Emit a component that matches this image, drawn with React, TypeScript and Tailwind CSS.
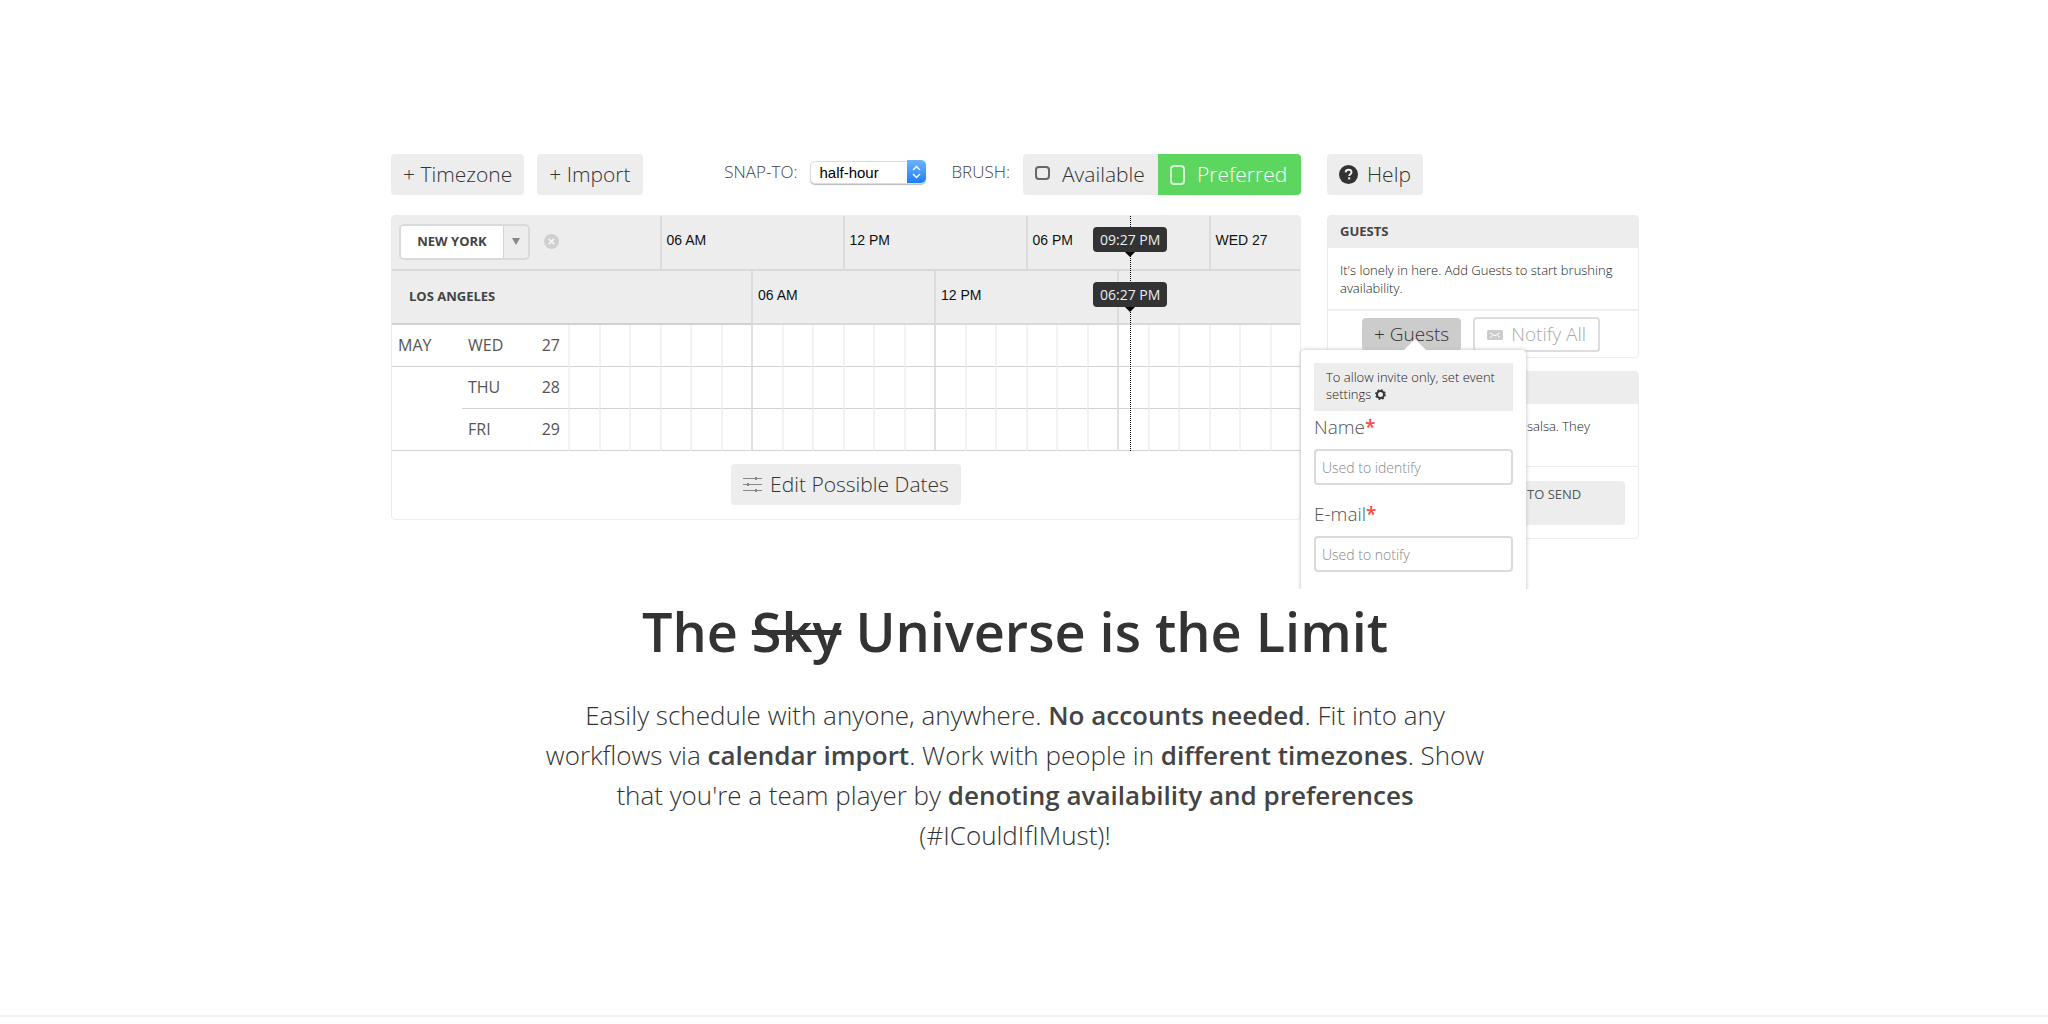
import React from "react";

const buttonBase =
  "flex h-[41px] shrink-0 items-center rounded-[4px] bg-[#ededed] text-[21px] font-light text-[#333] whitespace-nowrap";

const days = [
  { month: "MAY", day: "WED", date: "27" },
  { month: "", day: "THU", date: "28" },
  { month: "", day: "FRI", date: "29" },
];

function HelpIcon() {
  return (
    <svg width="19" height="19" viewBox="0 0 19 19" aria-hidden="true">
      <circle cx="9.5" cy="9.5" r="9.5" fill="#333" />
      <path
        d="M6.6 7.4c.1-1.700 1.300-2.600 3-2.600 1.600 0 2.900.9 2.900 2.400 0 1.900-2.300 2-2.300 3.700"
        fill="none"
        stroke="#ededed"
        strokeWidth="1.900"
      />
      <rect x="9.100" y="12.300" width="2.100" height="2.100" fill="#ededed" />
    </svg>
  );
}

function SlidersIcon() {
  return (
    <svg width="19" height="15" viewBox="0 0 19 15" fill="none" stroke="#888" strokeWidth="1" aria-hidden="true">
      <path d="M0 1.500h19M0 7.500h19M0 13.500h19" />
      <path d="M12 1.500h2M4 7.500h2M12 13.500h2" strokeWidth="3" />
    </svg>
  );
}

function MailIcon() {
  return (
    <svg width="16" height="10" viewBox="0 0 16 10" aria-hidden="true">
      <rect width="16" height="10" rx="1.500" fill="#ccc" />
      <path d="M3 2.800l5 3 5-3M3 7.500l2.500-2M13 7.500l-2.500-2" fill="none" stroke="#fff" strokeWidth="1" />
    </svg>
  );
}

function GearIcon() {
  return (
    <svg className="ml-1 inline-block align-[-1px]" width="11" height="11" viewBox="0 0 11 11" fill="none" stroke="#333" aria-hidden="true">
      <circle cx="5.500" cy="5.500" r="3.500" strokeWidth="2" />
      <circle cx="5.500" cy="5.500" r="4.800" strokeWidth="1.200" strokeDasharray="1.900 1.870" />
    </svg>
  );
}

function Toolbar() {
  return (
    <div className="flex h-[41px] items-center">
      <button className={buttonBase + " px-3"}>+ Timezone</button>
      <button className={buttonBase + " ml-[13px] px-3"}>+ Import</button>
      <div className="mb-[6px] ml-auto flex items-center">
        <label htmlFor="snap" className="text-[17px] font-light text-[#444]">
          SNAP-TO:
        </label>
        <div className="relative ml-[13px] h-[23px] w-[116px]">
          <select
            id="snap"
            className="h-full w-full appearance-none rounded-[5px] border border-[#ddd] bg-white pl-2 font-['Liberation_Sans',sans-serif] text-[15px] leading-none text-black shadow-[0_1px_1px_#bbb]"
          >
            <option>half-hour</option>
          </select>
          <span className="pointer-events-none absolute inset-y-0 right-0 flex w-[19px] items-center justify-center rounded-r-[5px] bg-linear-to-b from-[#6cb3fa] to-[#1a7dfb]">
            <svg width="9" height="14" viewBox="0 0 9 14" fill="none" stroke="#fff" strokeWidth="1.500" aria-hidden="true">
              <path d="M1 5l3.500-3.500L8 5M1 9l3.500 3.500L8 9" />
            </svg>
          </span>
        </div>
        <span className="ml-[25px] text-[17px] font-light text-[#444]">BRUSH:</span>
      </div>
      <div className="ml-[13px] flex">
        <button className={buttonBase + " w-[135px] rounded-r-none pl-3"}>
          <span className="mb-1 h-[14px] w-[15px] rounded-[4px] border-2 border-[#666]" />
          <span className="ml-3">Available</span>
        </button>
        <button className="flex h-[41px] w-[143px] items-center rounded-r-[4px] bg-[#5cd65f] pl-3 text-[21px] font-light text-white">
          <span className="h-5 w-[15px] rounded-[4px] border-2 border-[#d5f5d5]" />
          <span className="ml-3">Preferred</span>
        </button>
      </div>
    </div>
  );
}

function TimeMarker({ label }: { label: string }) {
  return (
    <div className="flex h-[55px] flex-col items-center pt-[11px]">
      <span className="flex h-[25px] w-[74px] items-center justify-center rounded-[4px] bg-[#333] text-[14px] text-[#eee] whitespace-nowrap">
        {label}
      </span>
      <span className="h-0 w-0 border-x-[5px] border-t-[5px] border-x-transparent border-t-black" />
    </div>
  );
}

const tick =
  "border-b-2 border-l-2 border-b-[#d9d9d9] border-l-[#dcdcdc] pb-1 pl-[5px] text-left align-middle font-['Liberation_Sans',sans-serif] text-[14px] font-normal text-[#111]";

function Calendar() {
  return (
    <div className="relative mt-5 rounded-[4px] border border-[#ececec]">
      <table className="w-full table-fixed border-separate border-spacing-0 text-[16px] font-light text-[#444]">
        <colgroup>
          <col className="w-[70px]" />
          <col className="w-[60px]" />
          <col className="w-[46px]" />
          {Array.from({ length: 24 }, (_, i) => (
            <col key={i} />
          ))}
        </colgroup>
        <thead className="bg-[#ededed]">
          <tr className="h-[55px]">
            <th colSpan={6} className="border-b-2 border-[#d9d9d9] pb-[2px] pl-[7px] font-normal">
              <div className="flex items-center">
                <div className="flex h-9 w-[131px] rounded-[5px] border-2 border-[#dadada]">
                  <button className="grow rounded-l-[3px] bg-white text-[13px] font-bold text-[#444]">NEW YORK</button>
                  <button aria-label="Choose timezone" className="flex w-[25px] items-center justify-center border-l border-[#d5d5d5]">
                    <span className="h-0 w-0 border-x-[4px] border-t-[7px] border-x-transparent border-t-[#888]" />
                  </button>
                </div>
                <button aria-label="Remove timezone" className="ml-[14px]">
                  <svg width="15" height="15" viewBox="0 0 15 15" aria-hidden="true">
                    <circle cx="7.500" cy="7.500" r="7.500" fill="#cfcfcf" />
                    <path d="M4.800 4.800l5.400 5.400M10.200 4.800l-5.400 5.400" stroke="#f4f4f4" strokeWidth="1.800" />
                  </svg>
                </button>
              </div>
            </th>
            <th colSpan={6} className={tick}>06 AM</th>
            <th colSpan={6} className={tick}>12 PM</th>
            <th colSpan={6} className={tick}>06 PM</th>
            <th colSpan={3} className={tick}>WED 27</th>
          </tr>
          <tr className="h-[54px]">
            <th colSpan={9} className="border-b-2 border-[#d0d0d0] pl-[17px] text-left text-[13px] font-bold text-[#444]">
              LOS ANGELES
            </th>
            <th colSpan={6} className={tick}>06 AM</th>
            <th colSpan={6} className={tick}>12 PM</th>
            <th colSpan={6} className={tick} />
          </tr>
        </thead>
        <tbody>
          {days.map(({ month, day, date }, row) => (
            <tr key={day} className="h-[42px]">
              <td className={(row === 1 ? "border-transparent" : "border-[#d2d2d2]") + " border-b pb-[2px] pl-[6px] font-normal text-[#555]"}>
                {month}
              </td>
              <td className="border-b border-[#d2d2d2] pb-[2px] pl-[6px] font-normal text-[#555]">{day}</td>
              <td className="border-b border-[#d2d2d2] pr-2 pb-[2px] text-right font-normal text-[#555]">{date}</td>
              {Array.from({ length: 24 }, (_, i) => (
                <td
                  key={i}
                  className={
                    (i > 0 && i % 6 === 0 ? "border-l-[#e0e0e0]" : "border-l-[#f2f2f2]") +
                    " border-b border-l-2 border-b-[#d2d2d2]"
                  }
                />
              ))}
            </tr>
          ))}
        </tbody>
      </table>
      <div className="flex justify-center pt-[13px] pb-[14px]">
        <button className={buttonBase + " gap-2 px-3"}>
          <SlidersIcon />
          Edit Possible Dates
        </button>
      </div>
      <div className="absolute top-0 left-[81.300%] flex h-[235px] w-0 flex-col items-center">
        <div className="absolute inset-y-0 border-l border-dotted border-black" />
        <div className="relative">
          <TimeMarker label="09:27 PM" />
          <TimeMarker label="06:27 PM" />
        </div>
      </div>
    </div>
  );
}

function Field({ id, label, placeholder }: { id: string; label: string; placeholder: string }) {
  return (
    <div className="flex h-[87px] flex-col">
      <label htmlFor={id} className="h-[38px] text-[19px] leading-8 font-light text-[#555]">
        {label}
        <span className="font-semibold text-[#f44]">*</span>
      </label>
      <input
        id={id}
        placeholder={placeholder}
        className="h-9 w-full rounded-[4px] border-2 border-[#dadada] px-[6px] text-[14px] font-light placeholder:text-[#888]"
      />
    </div>
  );
}

function GuestPopover() {
  return (
    <div className="absolute top-[135px] left-[-26px] w-[225px] rounded-t-[4px] bg-white px-[13px] pt-[13px] pb-8 shadow-[0_0_4px_#bbb]">
      <span className="absolute -top-[11px] left-[102px] h-0 w-0 border-x-[12px] border-b-[12px] border-x-transparent border-b-white" />
      <p className="h-12 bg-[#ededed] pt-[6px] pl-3 text-[13px] leading-[17px] font-light text-[#222]">
        To allow invite only, set event settings
        <GearIcon />
      </p>
      <Field id="name" label="Name" placeholder="Used to identify" />
      <Field id="email" label="E-mail" placeholder="Used to notify" />
    </div>
  );
}

function Sidebar() {
  return (
    <div className="w-[312px] shrink-0">
      <button className={buttonBase + " gap-[9px] px-3"}>
        <HelpIcon />
        Help
      </button>
      <div className="relative mt-5">
        <section className="h-[143px] rounded-[4px] border border-[#ececec]">
          <h2 className="flex h-8 items-center bg-[#ededed] pl-3 text-[13px] font-bold text-[#444]">GUESTS</h2>
          <p className="h-[63px] border-b-2 border-[#f0f0f0] pt-[13px] pl-3 text-[13px] leading-[18px] font-light text-[#222]">
            It's lonely in here. Add Guests to start brushing availability.
          </p>
          <div className="flex items-center justify-center gap-3 pt-[6px] pr-4 pl-3">
            <button className="h-[33px] rounded-[4px] bg-[#ccc] px-3 text-[19px] font-light text-[#333]">+ Guests</button>
            <button className="flex h-[35px] items-center gap-2 rounded-[4px] border-2 border-[#ddd] px-3 text-[19px] font-light text-[#aaa]">
              <MailIcon />
              Notify All
            </button>
          </div>
        </section>
        <section className="mt-[13px] h-[168px] rounded-[4px] border border-[#ececec]">
          <div className="h-8 bg-[#ededed]" />
          <p className="h-[63px] border-b border-[#ececec] pt-[13px] pl-[199px] text-[13px] leading-[18px] font-light text-[#222]">
            salsa. They
          </p>
          <button className="mx-[14px] mt-[14px] flex h-11 w-[283px] rounded-[4px] bg-[#ededed] pt-1 pl-[185px] text-[13px] text-[#555]">
            TO SEND
          </button>
        </section>
        <GuestPopover />
      </div>
    </div>
  );
}

export default function App() {
  return (
    <main className="border-b-2 border-[#f2f2f2] bg-white pt-[154px] pr-[18px] pb-[160px] font-['Open_Sans',sans-serif]">
      <div className="mx-auto flex max-w-[1248px] gap-[26px] overflow-hidden pb-[50px]">
        <div className="min-w-0 grow">
          <Toolbar />
          <Calendar />
        </div>
        <Sidebar />
      </div>
      <div className="mx-auto max-w-[960px] text-center">
        <h1 className="pt-[6px] text-[54px] leading-[72px] font-semibold text-[#333]">
          The <s>Sky</s> Universe is the Limit
        </h1>
        <p className="mt-7 text-[26px] leading-10 font-light text-[#333]">
          Easily schedule with anyone, anywhere. <strong className="font-semibold text-[#444]">No accounts needed</strong>. Fit
          into any workflows via <strong className="font-semibold text-[#444]">calendar import</strong>. Work with people in{" "}
          <strong className="font-semibold text-[#444]">different timezones</strong>. Show that you're a team player by{" "}
          <strong className="font-semibold text-[#444]">denoting availability and preferences</strong> (#ICouldIfIMust)!
        </p>
      </div>
    </main>
  );
}
